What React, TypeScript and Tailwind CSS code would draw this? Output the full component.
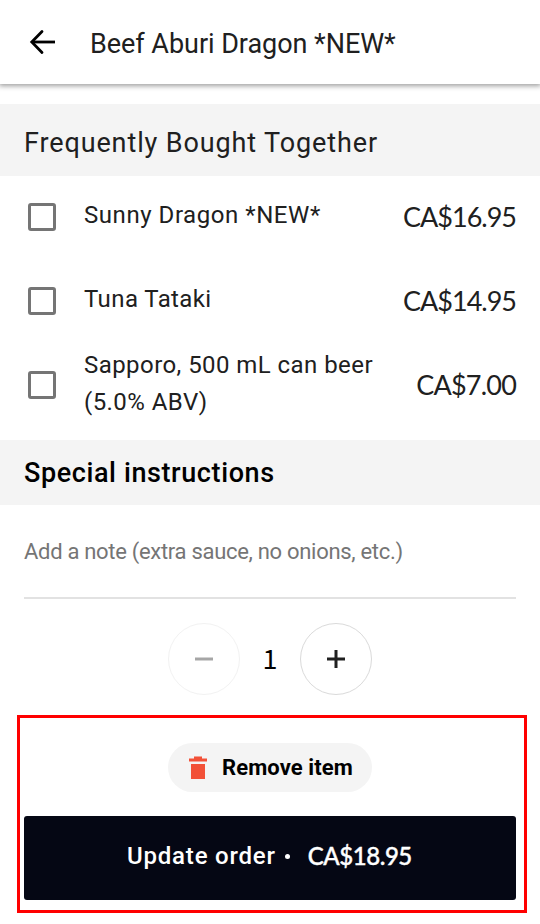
import { useState } from 'react'

interface Extra {
  id: string
  name: string
  price: string
  nameClass: string
  priceClass: string
}

const extras: Extra[] = [
  { id: 'sunny', name: 'Sunny Dragon *NEW*', price: 'CA$16.95', nameClass: 'pb-1 tracking-[0.55px]', priceClass: 'tracking-[-1px]' },
  { id: 'tuna', name: 'Tuna Tataki', price: 'CA$14.95', nameClass: 'pb-1 tracking-[0.4px]', priceClass: 'tracking-[-1px]' },
  { id: 'sapporo', name: 'Sapporo, 500 mL can beer (5.0% ABV)', price: 'CA$7.00', nameClass: 'pb-0.5 tracking-[0.44px]', priceClass: 'tracking-[-0.8px]' },
]

function ArrowLeft() {
  return (
    <svg width="26" height="26" viewBox="0 0 26 26" fill="none" stroke="#000" strokeWidth="2.8">
      <path d="M26 13H3" />
      <path d="M13 2.5 2.8 13 13 23.5" strokeLinecap="round" />
    </svg>
  )
}

function Trash() {
  return (
    <svg width="18" height="24" viewBox="0 0 18 24" fill="#f25138">
      <path d="M5 .5h8v2h5v3H0v-3h5zM2 8h14v15H2z" />
    </svg>
  )
}

export default function App() {
  const [checked, setChecked] = useState<string[]>([])
  const [quantity, setQuantity] = useState(1)

  function toggle(id: string) {
    setChecked(c => (c.includes(id) ? c.filter(x => x !== id) : [...c, id]))
  }

  return (
    <div className="flex h-[924px] w-[540px] flex-col overflow-hidden bg-white font-['Roboto',sans-serif] text-[#202020]">
      <header className="flex h-[84px] shrink-0 items-center bg-white pl-[29px] shadow-[0_1px_5px_1px_rgba(0,0,0,0.38)]">
        <button aria-label="Back">
          <ArrowLeft />
        </button>
        <h1 className="ml-[35px] pt-[3px] text-[27px] leading-8 tracking-[-0.04px] whitespace-nowrap">Beef Aburi Dragon *NEW*</h1>
      </header>

      <h2 className="mt-5 flex h-[72px] shrink-0 items-center bg-[#f4f4f4] px-6 pt-1.5 text-[27px] tracking-[0.88px] whitespace-nowrap">
        Frequently Bought Together
      </h2>

      <ul className="h-[264px] shrink-0">
        {extras.map(e => (
          <li key={e.id} className="flex h-[84px] items-center pr-6 pb-0.5 pl-7">
            <button
              role="checkbox"
              aria-checked={checked.includes(e.id)}
              aria-label={e.name}
              onClick={() => toggle(e.id)}
              className={`size-7 shrink-0 rounded-[3px] border-3 border-[#757575] ${checked.includes(e.id) ? 'bg-[#757575]' : ''}`}
            />
            <span className={`ml-7 w-[300px] text-[24px] leading-[37px] ${e.nameClass}`}>{e.name}</span>
            <span className={`ml-auto font-['Lato',sans-serif] text-[27px] whitespace-nowrap ${e.priceClass}`}>{e.price}</span>
          </li>
        ))}
      </ul>

      <h2 className="flex h-[65px] shrink-0 items-center bg-[#f4f4f4] px-6 pt-0.5 text-[27px] font-medium tracking-[0.6px] whitespace-nowrap text-black">
        Special instructions
      </h2>

      <div className="mx-6 flex h-[94px] shrink-0 items-center border-b-2 border-[#e2e2e2] text-[22px] tracking-[-0.3px] whitespace-nowrap text-[#757575]">
        Add a note (extra sauce, no onions, etc.)
      </div>

      <div className="mt-6 flex h-[72px] shrink-0 items-center justify-center">
        <button
          aria-label="Decrease quantity"
          onClick={() => setQuantity(q => Math.max(1, q - 1))}
          className="flex size-[72px] items-center justify-center rounded-full border border-[#f2f2f2]"
        >
          <svg width="18" height="18" viewBox="0 0 18 18" stroke="#a6a6a6" strokeWidth="3">
            <path d="M0 9h18" />
          </svg>
        </button>
        <span className="w-[60px] pb-1 text-center font-['Noto_Sans_CJK_SC',sans-serif] text-[27px] leading-none text-black">{quantity}</span>
        <button
          aria-label="Increase quantity"
          onClick={() => setQuantity(q => q + 1)}
          className="flex size-[72px] items-center justify-center rounded-full border border-[#dadada]"
        >
          <svg width="18" height="18" viewBox="0 0 18 18" stroke="#202020" strokeWidth="3">
            <path d="M0 9h18M9 0v18" />
          </svg>
        </button>
      </div>

      <div className="mt-5 mr-[13px] ml-[17px] flex h-[198px] shrink-0 flex-col items-center border-3 border-[#ff0000] pt-[25px] pr-2 pl-1">
        <button className="flex h-[49px] w-[204px] items-center rounded-full bg-[#f4f4f4] pl-[21px]">
          <Trash />
          <span className="ml-[15px] text-[22px] font-bold tracking-[0.1px] whitespace-nowrap text-black">Remove item</span>
        </button>
        <button className="mt-6 flex h-[84px] w-full items-center rounded-[3px] bg-[#050714] pb-1 pl-[103px] text-[24px] font-medium whitespace-nowrap text-white">
          <span className="tracking-[0.8px]">Update order</span>
          <span className="ml-[9px] size-[5px] rounded-full bg-white" />
          <span className="ml-[18px] font-['Lato',sans-serif] text-[24px] tracking-[-0.45px] [-webkit-text-stroke:0.4px_white]">CA$18.95</span>
        </button>
      </div>
    </div>
  )
}
